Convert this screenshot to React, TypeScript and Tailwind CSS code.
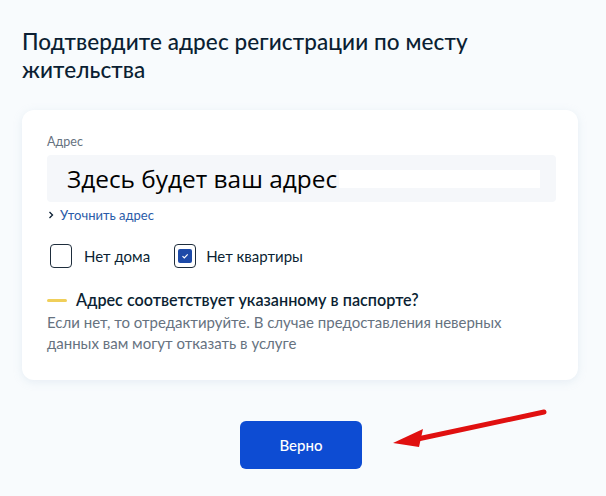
export default function App() {
  return (
    <div
      className="relative w-[606px] h-[496px] overflow-hidden bg-[#f8fbfd] text-[#0b1f33]"
      style={{ fontFamily: 'Lato, "Noto Sans", sans-serif' }}
    >
      <div className="px-[22px] pt-[28px]">
        <h1 className="text-[22.5px] leading-[28px] font-medium tracking-[0.1px] text-[#0b1f33]">
          Подтвердите адрес регистрации по месту
          <br />
          жительства
        </h1>

        <div className="mt-[26px] w-[556px] h-[270px] bg-white rounded-[12px] shadow-[0_2px_8px_rgba(180,200,220,0.25)] pl-[25px] pr-[22px] pt-[24px]">
          <div className="text-[12.5px] leading-[16px] text-[#66727f]">Адрес</div>
          <div className="mt-[5px] h-[47px] bg-[#f5f7fa] rounded-[4px] flex items-center pl-[20px] pr-[16px]">
            <span
              className="text-[24.4px] leading-[30px] text-black whitespace-nowrap"
              style={{ fontFamily: '"Open Sans", "Noto Sans", sans-serif' }}
            >
              Здесь будет ваш адрес
            </span>
            <div className="ml-[2px] h-[18px] flex-1 bg-white" />
          </div>
          <div className="mt-[5px] flex items-center gap-[5px] text-[13px] leading-[16px]">
            <svg width="8" height="8" viewBox="0 0 8 8" fill="none">
              <path d="M2.5 1l3 3-3 3" stroke="#0b1f33" strokeWidth="1.3" />
            </svg>
            <span className="text-[#2a5ba8]">Уточнить адрес</span>
          </div>

          <div className="mt-[21px] flex items-center">
            <div className="ml-[3px] w-[22px] h-[24px] rounded-[4px] border-[1.5px] border-[#1e2d3c]" />
            <span className="ml-[12px] text-[15px] text-[#0b1f33]">Нет дома</span>
            <div className="ml-[24px] w-[22px] h-[24px] rounded-[4px] border-[1.5px] border-[#1e2d3c] flex items-center justify-center">
              <div className="w-[14px] h-[14px] rounded-[2px] bg-[#1d4aa8] flex items-center justify-center">
                <svg width="10" height="10" viewBox="0 0 10 10" fill="none">
                  <path d="M2.5 5.2l1.8 1.8 3.4-3.6" stroke="white" strokeWidth="1.2" />
                </svg>
              </div>
            </div>
            <span className="ml-[10px] text-[15px] text-[#0b1f33]">Нет квартиры</span>
          </div>

          <div className="mt-[22px] flex items-center">
            <div className="w-[20px] h-[3px] rounded-full bg-[#f0cf5a]" />
            <span className="ml-[9px] text-[16.2px] leading-[20px] font-semibold text-[#0b1f33]">
              Адрес соответствует указанному в паспорте?
            </span>
          </div>
          <div className="mt-[2px] text-[15px] leading-[21px] text-[#66727f]">
            Если нет, то отредактируйте. В случае предоставления неверных
            <br />
            данных вам могут отказать в услуге
          </div>
        </div>

        <div className="mt-[41px] flex">
          <button className="ml-[218px] w-[122px] h-[48px] rounded-[6px] bg-[#0d4cd3] text-white text-[15px] font-medium">
            Верно
          </button>
        </div>
      </div>

      <svg className="absolute left-[385px] top-[400px]" width="170" height="50" viewBox="0 0 170 50">
        <path d="M159 12 L28 40" stroke="#e01010" strokeWidth="5" strokeLinecap="round" />
        <path d="M8 43 L38 29 L34 47 Z" fill="#e01010" />
      </svg>
    </div>
  )
}
